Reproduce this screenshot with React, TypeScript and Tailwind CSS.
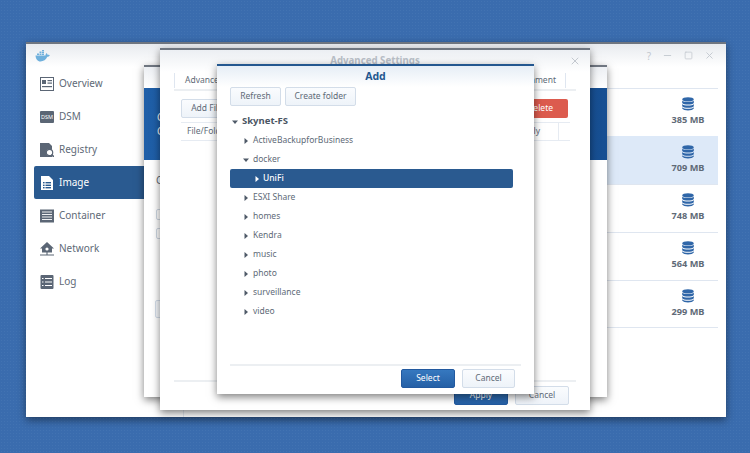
import { X, Minus, Square } from 'lucide-react';

const font = { fontFamily: '"Noto Sans", Tahoma, sans-serif' };

const navItems = ['Overview', 'DSM', 'Registry', 'Image', 'Container', 'Network', 'Log'];
const sizes = ['385 MB', '709 MB', '748 MB', '564 MB', '299 MB'];
const folders = ['ESXI Share', 'homes', 'Kendra', 'music', 'photo', 'surveillance', 'video'];

function NavIcon({ name, active }: { name: string; active: boolean }) {
  const c = active ? '#ffffff' : '#5b6675';
  const bg = active ? '#2a5a90' : '#ffffff';
  return (
    <svg width="14" height="14" viewBox="0 0 14 14" className="shrink-0">
      {name === 'Overview' && (
        <g>
          <rect x="0.5" y="0.5" width="13" height="13" fill={bg} stroke={c} />
          <rect x="2" y="3" width="4" height="4" fill={c} />
          <rect x="7.5" y="3" width="4.5" height="1.2" fill={c} />
          <rect x="7.5" y="5.5" width="4.5" height="1.2" fill={c} />
          <rect x="2" y="9" width="10" height="1.2" fill={c} />
        </g>
      )}
      {name === 'DSM' && (
        <g>
          <rect x="0" y="1" width="14" height="12" rx="1" fill={c} />
          <text x="7" y="9.2" textAnchor="middle" fontSize="5.5" fill={bg}>
            DSM
          </text>
        </g>
      )}
      {name === 'Registry' && (
        <g>
          <path d="M0 0H9L12 3V14H0Z" fill={c} />
          <circle cx="9.5" cy="9.5" r="3.2" fill={bg} stroke={c} strokeWidth="1.2" />
          <path d="M11.5 11.5L14 14" stroke={c} strokeWidth="1.6" />
        </g>
      )}
      {name === 'Image' && (
        <g>
          <path d="M1 0H9L13 4V14H1Z" fill={c} />
          <rect x="3" y="6" width="1.6" height="1.4" fill={bg} />
          <rect x="5.5" y="6" width="5.5" height="1.4" fill={bg} />
          <rect x="3" y="8.6" width="1.6" height="1.4" fill={bg} />
          <rect x="5.5" y="8.6" width="5.5" height="1.4" fill={bg} />
          <rect x="3" y="11" width="1.6" height="1.4" fill={bg} />
          <rect x="5.5" y="11" width="5.5" height="1.4" fill={bg} />
        </g>
      )}
      {name === 'Container' && (
        <g>
          <rect x="0" y="0.5" width="14" height="13" fill={c} />
          <path d="M2 3H12M2 5.5H12M2 8H12M2 10.5H12" stroke={bg} strokeWidth="0.9" />
        </g>
      )}
      {name === 'Network' && (
        <g>
          <path d="M7 0L14 6.5H12V10.5H2V6.5H0Z" fill={c} />
          <circle cx="7" cy="7" r="1.6" fill={bg} />
          <path d="M7 10V13M0 13H14" stroke={c} strokeWidth="1.1" />
        </g>
      )}
      {name === 'Log' && (
        <g>
          <rect x="0.5" y="0" width="13" height="14" rx="1" fill={c} />
          <path d="M2 3.5H3.5M5 3.5H12M2 7H3.5M5 7H12M2 10.5H3.5M5 10.5H12" stroke={bg} strokeWidth="1.1" />
        </g>
      )}
    </svg>
  );
}

function Whale() {
  return (
    <svg width="15" height="12" viewBox="0 0 15 12">
      <path
        d="M0.5 5.5H10.5C10.7 4 11 3.5 11.6 3C12.3 3.6 12.5 4.2 12.5 4.8C13.2 4.6 14 4.7 14.8 5.2C14.2 6.4 13.2 6.8 12.3 6.8C11 9.6 8.5 11.5 5.5 11.5C2.5 11.5 0.8 9 0.5 5.5Z"
        fill="#6fb0dc"
      />
      <path d="M2 3.5H4V5H2ZM4.5 3.5H6.5V5H4.5ZM7 3.5H9V5H7ZM4.5 1.5H6.5V3H4.5ZM7 1.5H9V3H7ZM7 0H9V1H7Z" fill="#6fb0dc" />
    </svg>
  );
}

function Disk() {
  return (
    <svg width="12" height="14" viewBox="0 0 12 14">
      <ellipse cx="6" cy="2.4" rx="5.8" ry="2.2" fill="#2f66a8" />
      <path d="M0.2 3.6C1.5 5.6 10.5 5.6 11.8 3.6V6C10.5 8 1.5 8 0.2 6Z" fill="#2f66a8" />
      <path d="M0.2 7C1.5 9 10.5 9 11.8 7V9.2C10.5 11.2 1.5 11.2 0.2 9.2Z" fill="#2f66a8" />
      <path d="M0.2 10.2C1.5 12.2 10.5 12.2 11.8 10.2V11.6C10.5 14.2 1.5 14.2 0.2 11.6Z" fill="#2f66a8" />
    </svg>
  );
}

function Caret({ open, light }: { open?: boolean; light?: boolean }) {
  const fill = light ? '#ffffff' : '#4f5a68';
  return (
    <svg width="6" height="6" viewBox="0 0 6 6" className="shrink-0">
      {open ? <path d="M0 1.5H6L3 5Z" fill={fill} /> : <path d="M1.5 0L5 3L1.5 6Z" fill={fill} />}
    </svg>
  );
}

function GrayButton({ label, className }: { label: string; className: string }) {
  return (
    <div
      className={`flex items-center justify-center rounded-[2px] border border-[#d3dde9] bg-gradient-to-b from-[#fafcfe] to-[#eef3f9] text-[8.5px] text-[#606a77] ${className}`}
    >
      {label}
    </div>
  );
}

function BlueButton({ label, className }: { label: string; className: string }) {
  return (
    <div
      className={`flex items-center justify-center rounded-[2px] border border-[#22599f] bg-gradient-to-b from-[#3678bf] to-[#2560a6] text-[8.5px] text-white ${className}`}
    >
      {label}
    </div>
  );
}

function TreeRow({ label, open }: { label: string; open?: boolean }) {
  return (
    <div className="flex h-[19px] items-center gap-[4px] pl-[13px] text-[8.5px] text-[#606a77]">
      <Caret open={open} />
      <span>{label}</span>
    </div>
  );
}

export default function App() {
  return (
    <div
      className="relative h-[453px] w-[750px] overflow-hidden bg-[#3a6cae] bg-[radial-gradient(#4273b2_1px,transparent_1px)] bg-[length:3px_3px]"
      style={font}
    >
      {/* main window */}
      <div className="absolute left-[26px] top-[42px] flex h-[375px] w-[700px] flex-col border-t-2 border-[#6f7680] bg-white shadow-[0_3px_8px_rgba(0,0,0,0.45)]">
        <div className="flex h-[23px] shrink-0 items-center justify-between bg-gradient-to-b from-[#e8ebef] to-white pl-[9px] pr-[11px]">
          <Whale />
          <div className="flex items-center gap-[11px] text-[#c3c8cf]">
            <span className="text-[10px] leading-none">?</span>
            <Minus size={11} />
            <Square size={9} />
            <X size={11} />
          </div>
        </div>
        <div className="flex flex-1">
          <div className="flex w-[118px] shrink-0 flex-col pl-[8px]">
            {navItems.map((item) => {
              const active = item === 'Image';
              return (
                <div
                  key={item}
                  className={`flex h-[33px] items-center gap-[5px] rounded-l-[2px] pl-[6px] text-[10px] ${
                    active ? 'bg-[#2a5a90] text-white' : 'text-[#606a77]'
                  }`}
                >
                  <NavIcon name={item} active={active} />
                  <span>{item}</span>
                </div>
              );
            })}
          </div>
          <div className="ml-[39px] mr-[8px] flex-1 border-l border-[#e6ebf2] pt-[21px]">
            {sizes.map((size, i) => (
              <div
                key={size}
                className={`flex h-[48px] flex-col items-end border-t pr-[8px] pt-[8px] ${
                  i === 1 ? 'border-[#dde9f8] bg-[#dde9f8]' : 'border-[#dfe6f0]'
                } ${i === 4 ? 'border-b' : ''}`}
              >
                <div className="flex w-[44px] flex-col items-center">
                  <Disk />
                  <span className="mt-[2px] whitespace-nowrap text-[9.2px] font-bold text-[#606a77]">{size}</span>
                </div>
              </div>
            ))}
          </div>
        </div>
      </div>

      {/* image details window */}
      <div className="absolute left-[144px] top-[65px] flex h-[332px] w-[463px] flex-col border-t-2 border-[#6f7680] bg-white shadow-[0_3px_8px_rgba(0,0,0,0.5)]">
        <div className="h-[21px] shrink-0 bg-gradient-to-b from-[#eceff3] to-white" />
        <div className="flex h-[72px] shrink-0 flex-col gap-[1px] bg-gradient-to-r from-[#1f5fa8] to-[#174f92] pl-[13px] pt-[23px] text-[10px] leading-[13px] text-white">
          <span>C</span>
          <span>C</span>
        </div>
        <div className="pl-[12px] pt-[13px] text-[10px] text-[#606a77]">C</div>
        <div className="ml-[12px] mt-[21px] h-[11px] w-[14px] rounded-[2px] border border-[#cfd8e3]" />
        <div className="ml-[12px] mt-[8px] h-[11px] w-[14px] rounded-[2px] border border-[#cfd8e3]" />
        <div className="ml-[11px] mt-[61px] h-[18px] w-[14px] rounded-[2px] border border-[#d3dde9] bg-[#f4f7fb]" />
      </div>

      {/* advanced settings window */}
      <div className="absolute left-[160px] top-[48px] flex h-[362px] w-[430px] flex-col border-t-2 border-[#6f7680] bg-white shadow-[0_3px_8px_rgba(0,0,0,0.5)]">
        <div className="relative flex h-[22px] shrink-0 items-center justify-center bg-gradient-to-b from-[#eceff3] to-white text-[9.7px] font-bold text-[#b8bec6]">
          Advanced Settings
          <X size={12} color="#c3c8cf" className="absolute right-[9px] top-[5px]" />
        </div>
        <div className="mx-[14px] flex h-[19px] items-center justify-between border-b-2 border-[#eceff2] pb-[1px] text-[8.5px] text-[#606a77]">
          <span className="flex h-[15px] items-center border-l border-[#dfe6f0] pl-[10px]">Advanced</span>
          <span className="mr-[10px] flex h-[15px] items-center border-r border-[#dfe6f0] pr-[9px]">nment</span>
        </div>
        <div className="ml-[21px] mr-[22px] mt-[8px] flex justify-between">
          <GrayButton label="Add File" className="h-[19px] w-[52px]" />
          <div className="flex h-[19px] w-[70px] items-center justify-end rounded-[2px] bg-[#dc5b4e] pr-[15px] text-[8.5px] text-white">
            Delete
          </div>
        </div>
        <div className="ml-[21px] mr-[20px] mt-[4px] flex h-[19px] items-center justify-between border-y border-[#e6ebf2] pl-[6px] text-[8.5px] text-[#606a77]">
          <span>File/Folder</span>
          <span className="mr-[11px] flex h-full items-center border-r border-[#e6ebf2] pr-[18px]">ly</span>
        </div>
        <div className="mx-[14px] mt-auto flex h-[30px] justify-end gap-[7px] border-t-2 border-[#eceff2] pr-[7px] pt-[4px]">
          <BlueButton label="Apply" className="h-[19px] w-[54px]" />
          <GrayButton label="Cancel" className="h-[19px] w-[54px]" />
        </div>
      </div>

      {/* add folder dialog */}
      <div className="absolute left-[217px] top-[64px] flex h-[330px] w-[317px] flex-col border-t-2 border-[#23578f] bg-white shadow-[0_3px_8px_rgba(0,0,0,0.5)]">
        <div className="flex h-[21px] shrink-0 items-center justify-center bg-gradient-to-b from-[#e6eef6] to-white text-[10.5px] font-bold text-[#23578f]">
          Add
        </div>
        <div className="ml-[13px] flex gap-[4px]">
          <GrayButton label="Refresh" className="h-[19px] w-[51px]" />
          <GrayButton label="Create folder" className="h-[19px] w-[71px]" />
        </div>
        <div className="ml-[13px] mr-[21px] mt-[6px] flex-1">
          <div className="flex h-[19px] items-center gap-[4px] pl-[2px] text-[9.5px] font-bold text-[#4a5563]">
            <Caret open />
            <span>Skynet-FS</span>
          </div>
          <TreeRow label="ActiveBackupforBusiness" />
          <TreeRow label="docker" open />
          <div className="flex h-[19px] items-center gap-[3px] rounded-[2px] bg-[#2a5a90] pl-[24px] text-[8.5px] font-medium text-white">
            <Caret light />
            <span>UniFi</span>
          </div>
          {folders.map((folder) => (
            <TreeRow key={folder} label={folder} />
          ))}
        </div>
        <div className="ml-[13px] mr-[13px] flex h-[30px] shrink-0 justify-end gap-[7px] border-t-2 border-[#eceff2] pr-[6px] pt-[3px]">
          <BlueButton label="Select" className="h-[19px] w-[54px]" />
          <GrayButton label="Cancel" className="h-[19px] w-[53px]" />
        </div>
      </div>
    </div>
  );
}
